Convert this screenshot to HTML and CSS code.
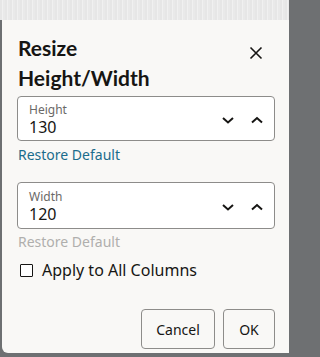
FILE: index.html
```html
<!DOCTYPE html>
<html>
<head>
<meta charset="utf-8">
<link rel="stylesheet" href="styles.css">
</head>
<body>
<div class="backdrop-top"></div>
<div class="stage">
  <div class="dialog">
    <div class="header">
      <h1 class="title">Resize<br>Height/Width</h1>
      <button class="close" aria-label="Close">
        <svg width="14" height="14" viewBox="0 0 14 14"><path d="M1.5 1.5 L12.5 12.5 M12.5 1.5 L1.5 12.5" stroke="#161513" stroke-width="1.6" fill="none"/></svg>
      </button>
    </div>
    <div class="field">
      <div class="field-text">
        <span class="label">Height</span>
        <span class="value">130</span>
      </div>
      <div class="steppers">
        <svg width="14" height="10" viewBox="0 0 14 10"><path d="M2 3 L7 7.5 L12 3" stroke="#161513" stroke-width="2" fill="none"/></svg>
        <svg width="14" height="10" viewBox="0 0 14 10"><path d="M2 7.5 L7 3 L12 7.5" stroke="#161513" stroke-width="2" fill="none"/></svg>
      </div>
    </div>
    <a class="restore" href="#">Restore Default</a>
    <div class="field field-2">
      <div class="field-text">
        <span class="label">Width</span>
        <span class="value">120</span>
      </div>
      <div class="steppers">
        <svg width="14" height="10" viewBox="0 0 14 10"><path d="M2 3 L7 7.5 L12 3" stroke="#161513" stroke-width="2" fill="none"/></svg>
        <svg width="14" height="10" viewBox="0 0 14 10"><path d="M2 7.5 L7 3 L12 7.5" stroke="#161513" stroke-width="2" fill="none"/></svg>
      </div>
    </div>
    <span class="restore disabled">Restore Default</span>
    <label class="check">
      <span class="box"></span>
      <span>Apply to All Columns</span>
    </label>
    <div class="footer">
      <button class="btn btn-cancel">Cancel</button>
      <button class="btn btn-ok">OK</button>
    </div>
  </div>
</div>
</body>
</html>
```

FILE: styles.css
```css
html, body {
  margin: 0;
  padding: 0;
}
html {
  background: #6e7072;
}
body {
  width: 289px;
  height: 357px;
  overflow: hidden;
  background: #6e7072;
  font-family: "Noto Sans", "Open Sans", sans-serif;
  color: #161513;
}
.backdrop-top {
  height: 20px;
  background: repeating-linear-gradient(90deg, #e6e6e6 0 2px, #f0f0f0 2px 3px, #e9e9e9 3px 5px);
}
.stage {
  padding-left: 2px;
}
.dialog {
  box-sizing: border-box;
  height: 333px;
  background: #f9f8f6;
  border-bottom-left-radius: 6px;
  padding: 13px 14px 0 15px;
  display: flex;
  flex-direction: column;
}
.header {
  display: flex;
  justify-content: space-between;
  align-items: flex-start;
}
.title {
  margin: 0;
  padding-left: 1px;
  font-family: Lato, "Noto Sans", sans-serif;
  font-size: 21px;
  line-height: 30px;
  font-weight: 700;
  letter-spacing: 0;
}
.close {
  margin-top: 13px;
  margin-right: 12px;
  padding: 0;
  border: 0;
  background: none;
  width: 14px;
  height: 14px;
  display: flex;
}
.field {
  margin-top: 3px;
  height: 45px;
  box-sizing: border-box;
  border: 1px solid #8d8c8a;
  border-radius: 4px;
  background: #ffffff;
  display: flex;
  justify-content: space-between;
  align-items: center;
  padding: 0 10px 0 11px;
}
.field-2 {
  margin-top: 17px;
  height: 47px;
}
.field-text {
  display: flex;
  flex-direction: column;
}
.label {
  font-size: 12px;
  line-height: 15px;
  color: #6a6967;
  margin-top: 2px;
}
.value {
  font-size: 16px;
  line-height: 20px;
  color: #161513;
}
.steppers {
  display: flex;
  gap: 15px;
  margin-top: 3px;
}
.restore {
  margin-top: 4px;
  padding-left: 1px;
  font-size: 14px;
  line-height: 20px;
  color: #1b6c8c;
  text-decoration: none;
  align-self: flex-start;
}
.restore.disabled {
  color: #b0afad;
  margin-top: 3px;
}
.check {
  margin-top: 7px;
  display: flex;
  align-items: center;
  gap: 9px;
  padding-left: 3px;
  font-size: 16px;
  line-height: 22px;
}
.box {
  width: 11px;
  height: 11px;
  border: 1px solid #161513;
  border-radius: 1px;
  background: #fff;
}
.footer {
  margin-top: auto;
  margin-bottom: 4px;
  display: flex;
  justify-content: flex-end;
  gap: 8px;
}
.btn {
  height: 40px;
  box-sizing: border-box;
  border: 1px solid #8d8c8a;
  border-radius: 4px;
  background: #f9f8f6;
  font-family: "Noto Sans", "Open Sans", sans-serif;
  font-size: 14px;
  color: #161513;
  padding: 0 14px;
}
.btn-cancel {
  width: 74px;
}
.btn-ok {
  width: 52px;
}
```
